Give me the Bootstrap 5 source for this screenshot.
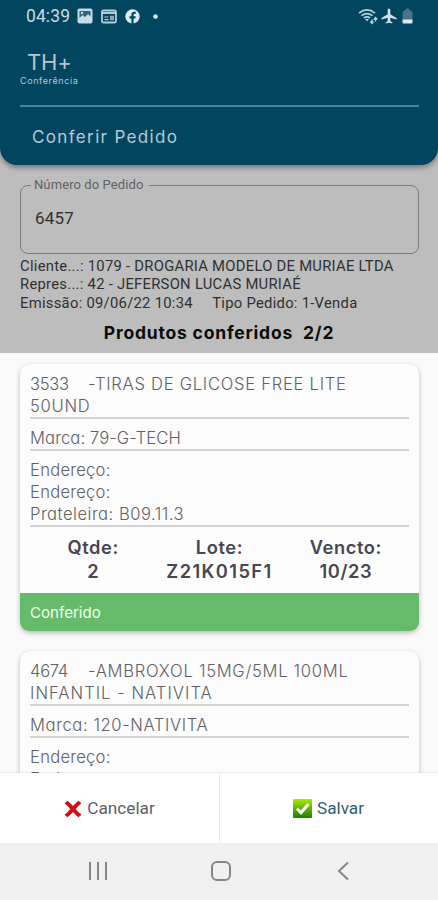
<!DOCTYPE html>
<html lang="pt-BR">
<head>
<meta charset="utf-8">
<meta name="viewport" content="width=device-width, initial-scale=1">
<title>Conferir Pedido</title>
<link href="https://cdn.jsdelivr.net/npm/bootstrap@5.3.0/dist/css/bootstrap.min.css" rel="stylesheet">
<style>
body{font-family:Inter,"Open Sans",sans-serif;font-feature-settings:"cv11";background:#fafafa;color:#606066}
.screen{height:900px}
.order-area{height:353px;background:#bdbdbd;color:#303030;font-family:Roboto,sans-serif}
.app-head{height:165px;background:#02455f;color:#b3ccd5;border-radius:0 0 17px 17px;box-shadow:0 3px 5px #0005;font-family:Inter,sans-serif;font-feature-settings:normal}
.status{height:32px;padding:0 25px 0 26px;font-family:Roboto,sans-serif;color:#c4dce4}
.clock{font-size:17.5px;line-height:32px;width:51px;letter-spacing:.1px}
.dot{margin-left:13px}
.plane{margin-left:3px}
.battery{margin-left:5px}
.head-body{padding:0 19px 0 20px}
.brand-name{font-size:22px;line-height:26px;padding:17px 0 0 7px;color:#b9c4c8;font-weight:400;letter-spacing:-.2px}
.brand-sub{font-size:9px;line-height:12px;letter-spacing:.6px}
.head-rule{height:2px;background:#4e8499;margin-top:18px}
.page-name{font-size:17px;line-height:24px;padding:18px 0 0 12px;letter-spacing:1.35px}
.order-field{height:69px;margin:20px 19px 0 20px;border:1px solid #7c7c7c;border-radius:8px;padding:0 13px}
.order-field .cap{display:table;font-size:13px;line-height:14px;padding:0 6px 0 3px;margin:-8px 0 0 -3px;color:#626262;background:#bdbdbd;letter-spacing:.1px}
.order-no{font-size:17px;line-height:24px;margin-top:14px;padding-left:1px;letter-spacing:.2px}
.order-info{font-size:14.8px;line-height:18.3px;padding:3px 0 0 20px;white-space:pre;letter-spacing:.27px}
.checked{font-family:Inter,sans-serif;font-size:17.5px;line-height:24px;font-weight:700;color:#0b0b0b;margin-top:9px;letter-spacing:.8px;white-space:pre}
.list-area{height:420px;padding:11px 19px 0 20px}
.item{background:#fcfcfc;border-radius:10px;box-shadow:0 2px 5px #0004;margin-bottom:20px;font-size:16.6px;line-height:22px;font-weight:300}
.rows{padding:9px 10px 0}
.block{border-bottom:2px solid #d2d2d2;margin-bottom:8px;white-space:pre;letter-spacing:.25px}
.code{width:58px;letter-spacing:-.3px}
.t1{letter-spacing:.72px}
.t2{letter-spacing:1.03px}
.tight{letter-spacing:.1px}
.loose{letter-spacing:.6px}
.shelf{letter-spacing:.5px}
.qty{font-size:18.3px;line-height:24px;font-weight:600;color:#484653;padding-bottom:10px;letter-spacing:.6px}
.lot{letter-spacing:1.4px}
.done{height:38px;background:#66bb6a;color:#effff0;border-radius:0 0 9px 9px;padding:9px 10px 7px;font-size:15.1px;font-weight:400}
.actions{height:70px;background:#fff;box-shadow:0 -1px 1px #0000000c;font-family:Roboto,sans-serif;font-size:17.2px}
.actions>div{padding-top:1px}
.actions>div+div{border-left:1px solid #e8e8e8}
.cancel{margin-left:5px}
.save{color:#315e72;padding-right:1px}
.sysnav{height:57px;background:#f0f0f0}
svg{display:block;flex:none}
</style>
</head>
<body>
<main class="screen d-flex flex-column overflow-hidden">
<section class="order-area flex-shrink-0">
<header class="app-head">
<div class="status d-flex align-items-center">
<span class="clock">04:39</span>
<svg width="16" height="16" viewBox="0 0 16 16"><rect x=".5" y=".5" width="15" height="15" rx="2" fill="#c4dce4"/><path d="M2.500 3h11v5.500L11 6 8 9 5.500 7l-3 3z" fill="#2f6479"/><path d="M3 13l3-3.500 2 1.700L11 8l2.500 2.500V13z" fill="#c4dce4"/><circle cx="5" cy="5" r="1.200" fill="#c4dce4"/></svg>
<svg class="ms-2" width="16" height="15" viewBox="0 0 16 15"><rect x="1" y="1.5" width="14" height="12" rx="1.5" fill="none" stroke="#b5cfd8" stroke-width="1.8"/><path d="M1 4h14" stroke="#b5cfd8" stroke-width="2"/><path d="M3.500 8h4M3.500 10.700h4" stroke="#b5cfd8" stroke-width="1.2"/><rect x="9" y="6.700" width="4" height="4.500" fill="#8cacb9"/></svg>
<svg class="ms-2" width="15" height="15" viewBox="0 0 15 15"><circle cx="7.5" cy="7.5" r="7.2" fill="#dcebef"/><path d="M6.400 15V9.500H4.500V7.200h1.900V5.700c0-2 1.200-3 3-3l1.400.1v2H9.700c-.9 0-1.100.5-1.100 1.100v1.300h2.100l-.4 2.300H8.600V15z" fill="#02455f"/></svg>
<svg class="dot" width="5" height="5"><circle cx="2.5" cy="2.5" r="2.3" fill="#dcebef"/></svg>
<svg class="ms-auto" width="20" height="17" viewBox="0 0 20 17" fill="none" stroke="#b5cfd8"><path d="M1 5.200q8-6.500 16 0M3.500 7.700q5.500-4.300 11 0M6 10q3-2.400 6 0" stroke-width="1.7"/><path d="M7 11h4l-2 2.500z" fill="#b5cfd8" stroke="none"/><path d="M14 15.500v-4m-1.700 2L14 15.400l1.500-1.900M17.500 9.500v4m-1.700-2.100 1.700-1.800 1.700 1.800" stroke-width="1.5"/></svg>
<svg class="plane" width="16" height="16" viewBox="0 0 16 16"><path d="M8 .5c.9 0 1.300.8 1.300 1.700v4l6.200 3.700v1.600L9.300 9.700v3.400l2 1.300v1.100L8 14.700l-3.300.8v-1.100l2-1.300V9.700L.5 11.500V9.900l6.200-3.700v-4C6.700 1.300 7.100.5 8 .5z" fill="#cfe1e7"/></svg>
<svg class="battery" width="11" height="16" viewBox="0 0 11 16"><path d="M3 2h1V.5h3V2h1l2.500 2v8h-10V4z" fill="#477487"/><path d="M.5 11.500h10v3q0 1-1 1h-8q-1 0-1-1z" fill="#dcebef"/></svg>
</div>
<div class="head-body">
<div class="brand-name">TH+</div>
<div class="brand-sub">Conferência</div>
<div class="head-rule"></div>
<div class="page-name">Conferir Pedido</div>
</div>
</header>
<div class="order-field"><label class="cap">Número do Pedido</label><div class="order-no">6457</div></div>
<div class="order-info"><div>Cliente...: 1079 - DROGARIA MODELO DE MURIAE LTDA</div><div>Repres...: 42 - JEFERSON LUCAS MURIAÉ</div><div>Emissão: 09/06/22 10:34     Tipo Pedido: 1-Venda</div></div>
<div class="checked text-center">Produtos conferidos  2/2</div>
</section>
<section class="list-area flex-shrink-0 overflow-hidden">
<article class="item">
<div class="rows">
<div class="block"><div class="d-flex"><div class="code">3533</div><div class="t1">-TIRAS DE GLICOSE FREE LITE</div></div><div class="t1">50UND</div></div>
<div class="block tight">Marca: 79-G-TECH</div>
<div class="block"><div>Endereço:</div><div>Endereço:</div><div class="shelf">Prateleira: B09.11.3</div></div>
<div class="row g-0 text-center qty"><div class="col-4"><div>Qtde:</div><div>2</div></div><div class="col-4"><div>Lote:</div><div class="lot">Z21K015F1</div></div><div class="col-4"><div>Vencto:</div><div>10/23</div></div></div>
</div>
<div class="done">Conferido</div>
</article>
<article class="item">
<div class="rows">
<div class="block"><div class="d-flex"><div class="code">4674</div><div class="t1">-AMBROXOL 15MG/5ML 100ML</div></div><div class="t2">INFANTIL - NATIVITA</div></div>
<div class="block loose">Marca: 120-NATIVITA</div>
<div class="block"><div>Endereço:</div><div>Endereço:</div></div>
</div>
</article>
</section>
<section class="actions d-flex flex-shrink-0 position-relative">
<div class="w-50 d-flex align-items-center justify-content-center"><svg width="18" height="18" viewBox="0 0 18 18"><path d="M.5 3.200L3.500.7Q6.500 3 9 6q2.500-3 5.500-5.300l3 2.500Q14 6 11.700 9q2.500 3 5.800 5.800l-3 2.500Q11.500 15 9 12q-2.500 3-5.500 5.300l-3-2.500Q4 12 6.300 9 4 6 .5 3.200z" fill="#cf0f12"/></svg><span class="cancel">Cancelar</span></div>
<div class="w-50 d-flex align-items-center justify-content-center save"><svg width="19" height="19" viewBox="0 0 19 19"><defs><linearGradient id="leaf" x2="0" y2="1"><stop stop-color="#a9ea00"/><stop offset="1" stop-color="#168000"/></linearGradient></defs><rect width="19" height="19" rx="1" fill="url(#leaf)"/><path d="M4 9.500l4 4.200 7.500-8.700" fill="none" stroke="#fff" stroke-width="3"/></svg><span class="cancel">Salvar</span></div>
</section>
<nav class="sysnav flex-shrink-0">
<svg width="438" height="57" viewBox="0 0 438 57" fill="none" stroke="#858585" stroke-width="2"><path d="M90 19v18M98 19v18M106 19v18"/><rect x="212" y="19" width="18" height="18" rx="5"/><path d="M348 19.500l-9 8.500 9 8.500"/></svg>
</nav>
</main>
<script src="https://cdn.jsdelivr.net/npm/bootstrap@5.3.0/dist/js/bootstrap.bundle.min.js"></script>
</body>
</html>
